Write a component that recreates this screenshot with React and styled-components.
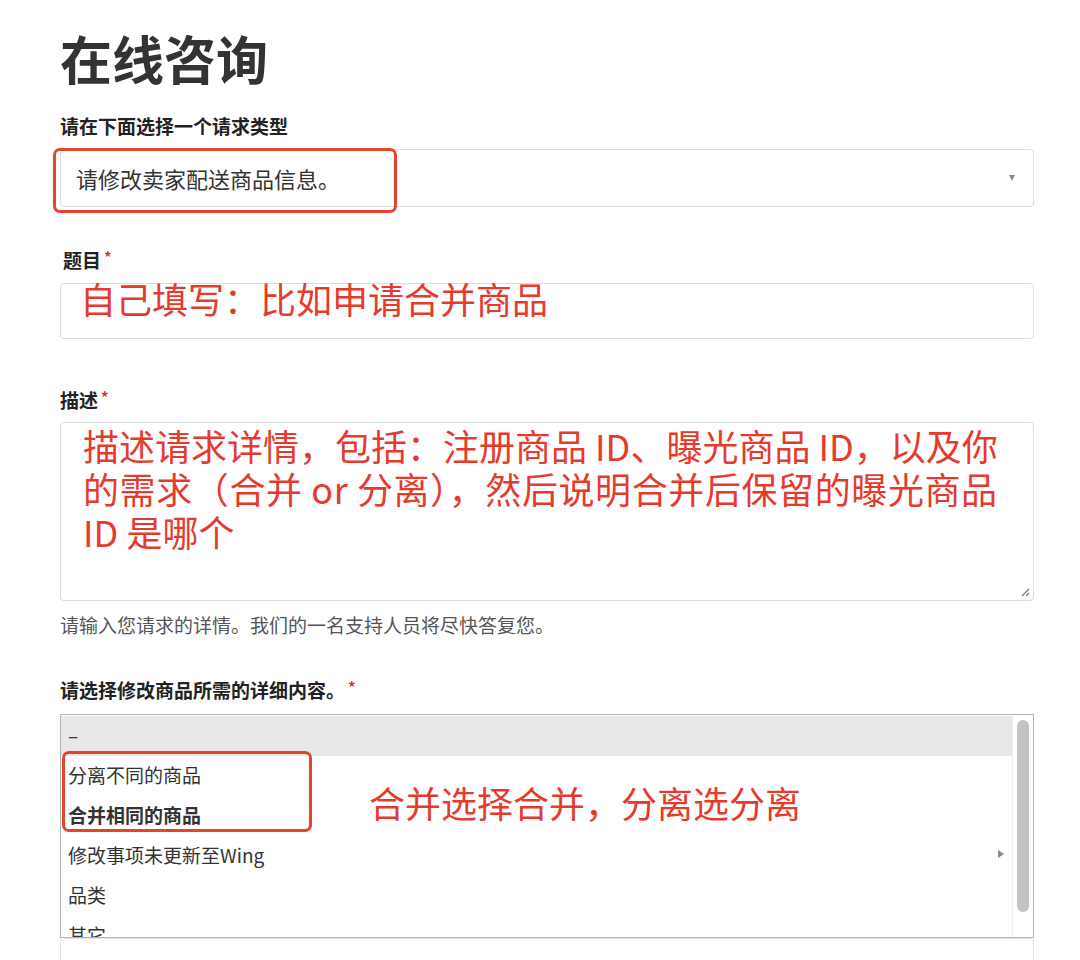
import React from 'react';
import styled, { createGlobalStyle } from 'styled-components';

const Global = createGlobalStyle`
  html, body {
    margin: 0;
    background: #fff;
  }
  body {
    font-family: "Noto Sans CJK SC", "Noto Sans", "Liberation Sans", sans-serif;
    color: #333;
  }
`;

const MARK = '#e5432e';
const INK_RED = '#e63a2c';

const Page = styled.div`
  width: 974px;
  padding: 28px 0 0 60px;
`;

const Title = styled.h1`
  margin: 0;
  font-size: 52px;
  line-height: 60px;
  font-weight: 700;
  color: #333;
`;

const Label = styled.div`
  margin-top: ${p => p.$top}px;
  padding-left: ${p => p.$indent || 0}px;
  font-size: 19px;
  line-height: 24px;
  font-weight: 700;
  color: #222;
`;

const Req = styled.span`
  color: #d9342b;
  font-size: 15px;
  vertical-align: top;
  line-height: 18px;
  margin-left: 3px;
`;

const Box = styled.div`
  position: relative;
  box-sizing: border-box;
  margin-top: ${p => p.$top}px;
  height: ${p => p.$h}px;
  border: 1px solid #dcdcdc;
  border-radius: 4px;
  background: #fff;
`;

const SelectBox = styled(Box)`
  display: flex;
  align-items: center;
  justify-content: space-between;
  padding: 0 18px 0 15px;
  font-size: 22px;
  color: #333;
`;

const Caret = styled.span`
  width: 0;
  height: 0;
  border-left: 3.5px solid transparent;
  border-right: 3.5px solid transparent;
  border-top: 6px solid #888;
`;

const Handwritten = styled.div`
  color: ${INK_RED};
  font-size: 36px;
  line-height: ${p => p.$lh}px;
  padding: ${p => p.$pt}px 0 0 ${p => p.$pl}px;
  white-space: nowrap;
`;

const Loose = styled.span`
  letter-spacing: 0.6px;
`;

const Resize = styled.svg`
  position: absolute;
  right: 3px;
  bottom: 3px;
`;

const Help = styled.div`
  margin-top: 12px;
  font-size: 19px;
  line-height: 24px;
  color: #555;
`;

const ListBox = styled.div`
  position: relative;
  box-sizing: border-box;
  margin-top: 12px;
  height: 224px;
  border: 1px solid #b4b4b4;
  display: flex;
  overflow: hidden;
  background: #fff;
`;

const Options = styled.div`
  flex: 1;
  padding-top: 1px;
`;

const Option = styled.div`
  box-sizing: border-box;
  height: 40px;
  display: flex;
  align-items: center;
  justify-content: space-between;
  padding: 0 30px 4px 7px;
  font-size: 19px;
  color: #333;
  font-weight: ${p => (p.$bold ? 700 : 400)};
  background: ${p => (p.$active ? '#e8e8e8' : 'transparent')};
`;

const SubArrow = styled.span`
  width: 0;
  height: 0;
  border-top: 4px solid transparent;
  border-bottom: 4px solid transparent;
  border-left: 6px solid #888;
  margin-right: -22px;
`;

const Track = styled.div`
  width: 21px;
  border-left: 1px solid #efefef;
  padding: 5px 0 0 4px;
  box-sizing: border-box;
`;

const Thumb = styled.div`
  width: 12px;
  height: 192px;
  border-radius: 6px;
  background: #c3c3c3;
`;

const Mark = styled.div`
  position: absolute;
  left: ${p => p.$x}px;
  top: ${p => p.$y}px;
  width: ${p => p.$w}px;
  height: ${p => p.$h}px;
  border: 3px solid ${MARK};
  border-radius: 7px;
  box-sizing: border-box;
  pointer-events: none;
`;

const Note = styled.div`
  position: absolute;
  left: 308px;
  top: 67px;
  font-size: 36px;
  line-height: 40px;
  color: ${INK_RED};
  white-space: nowrap;
`;

const NextBox = styled(Box)`
  border-color: #e4e4e4;
`;

const options = [
  { text: '–', active: true },
  { text: '分离不同的商品' },
  { text: '合并相同的商品', bold: true },
  { text: '修改事项未更新至Wing', sub: true },
  { text: '品类' },
  { text: '其它' },
];

export default function App() {
  return (
    <>
      <Global />
      <Page>
        <Title>在线咨询</Title>

        <Label $top={26}>请在下面选择一个请求类型</Label>
        <SelectBox $top={11} $h={58}>
          <span>请修改卖家配送商品信息。</span>
          <Caret />
          <Mark $x={-8} $y={-2} $w={344} $h={65} />
        </SelectBox>

        <Label $top={41} $indent={3}>题目<Req>*</Req></Label>
        <Box $top={11} $h={56}>
          <Handwritten $lh={28} $pt={0} $pl={19}>自己填写：比如申请合并商品</Handwritten>
        </Box>

        <Label $top={49}>描述<Req>*</Req></Label>
        <Box $top={10} $h={179}>
          <Handwritten $lh={43} $pt={1} $pl={22}>
            描述请求详情，包括：注册商品 ID、曝光商品 ID，以及你<br />
            <Loose>的需求（合并 or 分离），然后说明合并后保留的曝光商品</Loose><br />
            ID 是哪个
          </Handwritten>
          <Resize width="10" height="10" viewBox="0 0 10 10">
            <path d="M9 2 L2 9 M9 6 L6 9" stroke="#777" strokeWidth="1.2" />
          </Resize>
        </Box>
        <Help>请输入您请求的详情。我们的一名支持人员将尽快答复您。</Help>

        <Label $top={41}>请选择修改商品所需的详细内容。<Req>*</Req></Label>
        <ListBox>
          <Options>
            {options.map(o => (
              <Option key={o.text} $active={o.active} $bold={o.bold}>
                <span>{o.text}</span>
                {o.sub && <SubArrow />}
              </Option>
            ))}
          </Options>
          <Track>
            <Thumb />
          </Track>
          <Mark $x={1} $y={36} $w={250} $h={81} />
          <Note>合并选择合并，分离选分离</Note>
        </ListBox>
        <NextBox $top={0} $h={60} />
      </Page>
    </>
  );
}
